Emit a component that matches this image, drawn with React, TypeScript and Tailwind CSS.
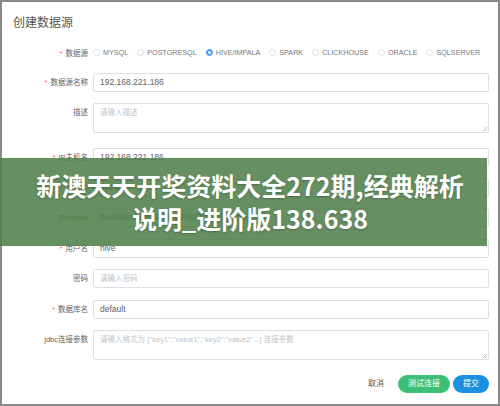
import React from 'react';

const FONT = '"Liberation Sans", "Noto Sans CJK SC", sans-serif';

const dbTypes = ['MYSQL', 'POSTGRESQL', 'HIVE/IMPALA', 'SPARK', 'CLICKHOUSE', 'ORACLE', 'SQLSERVER'];

const Label: React.FC<{ text: string; required?: boolean; top?: boolean }> = ({ text, required, top }) => (
  <div className={`w-[91px] shrink-0 flex justify-end pr-[5px] text-[7.5px] text-[#606266] leading-[19px] ${top ? 'self-start' : 'items-center'}`}>
    {required && <span className="text-[#f56c6c] mr-[3px]">*</span>}
    <span>{text}</span>
  </div>
);

const Input: React.FC<{ value?: string; placeholder?: string }> = ({ value, placeholder }) => (
  <div className="flex-1 h-[19px] border border-[#dcdfe6] rounded-[2px] px-[6px] flex items-center text-[8.5px]">
    {value ? <span className="text-[#606266]">{value}</span> : <span className="text-[#c0c4cc] text-[7.5px]">{placeholder}</span>}
  </div>
);

const Textarea: React.FC<{ placeholder: string }> = ({ placeholder }) => (
  <div className="relative flex-1 h-[30px] border border-[#dcdfe6] rounded-[2px] px-[6px] pt-[4px] text-[7.5px] text-[#c0c4cc] leading-[10px]">
    {placeholder}
    <svg className="absolute right-[1px] bottom-[1px]" width="5" height="5" viewBox="0 0 5 5">
      <path d="M5 1L1 5M5 3L3 5" stroke="#999" strokeWidth="0.6" />
    </svg>
  </div>
);

const Row: React.FC<{ children: React.ReactNode; className?: string }> = ({ children, className = '' }) => (
  <div className={`flex ${className}`}>{children}</div>
);

export default function App() {
  return (
    <div className="relative w-[500px] h-[406px] bg-white overflow-hidden" style={{ fontFamily: FONT }}>
      <div className="w-full h-full border-2 border-[#8a8a8a] pr-[9px]">
        <div className="pl-[11px] pt-[12px] text-[12px] leading-[18px] text-[#555]">创建数据源</div>

        {/* data source type */}
        <Row className="mt-[14px] h-[14px] items-center">
          <Label text="数据源" required />
          <div className="flex items-center gap-[9px] text-[7.2px] text-[#777]">
            {dbTypes.map(t => (
              <div key={t} className="flex items-center gap-[3px]">
                {t === 'HIVE/IMPALA' ? (
                  <span className="w-[7px] h-[7px] rounded-full border border-[#409eff] bg-[#409eff] flex items-center justify-center">
                    <span className="w-[3px] h-[3px] rounded-full bg-white" />
                  </span>
                ) : (
                  <span className="w-[7px] h-[7px] rounded-full border border-[#dcdfe6]" />
                )}
                <span>{t}</span>
              </div>
            ))}
          </div>
        </Row>

        <Row className="mt-[13px]">
          <Label text="数据源名称" required />
          <Input value="192.168.221.186" />
        </Row>
        <Row className="mt-[11px]">
          <Label text="描述" top />
          <Textarea placeholder="请输入描述" />
        </Row>
        <Row className="mt-[15px]">
          <Label text="IP主机名" required />
          <Input value="192.168.221.186" />
        </Row>
        <Row className="mt-[11px]">
          <Label text="端口" required />
          <Input value="10000" />
        </Row>
        <Row className="mt-[11px]">
          <Label text="Principal" required />
          <Input value="hive/admin@HADOOP.MODULE.COM" />
        </Row>
        <Row className="mt-[12px]">
          <Label text="用户名" required />
          <Input value="hive" />
        </Row>
        <Row className="mt-[11px]">
          <Label text="密码" />
          <Input placeholder="请输入密码" />
        </Row>
        <Row className="mt-[12px]">
          <Label text="数据库名" required />
          <Input value="default" />
        </Row>
        <Row className="mt-[11px]">
          <Label text="jdbc连接参数" top />
          <Textarea placeholder={'请输入格式为 {"key1":"value1","key2":"value2"...} 连接参数'} />
        </Row>

        <div className="mt-[15px] flex justify-end items-center gap-[3px] text-[8px]">
          <span className="text-[#555] mr-[11px]">取消</span>
          <span className="w-[52px] h-[18px] rounded-full bg-[#3cbf74] text-white flex items-center justify-center">测试连接</span>
          <span className="w-[36px] h-[18px] rounded-full bg-[#1b8fe0] text-white flex items-center justify-center">提交</span>
        </div>
      </div>

      {/* promo overlay */}
      <div className="absolute left-0 right-0 top-[158px] h-[88px] flex items-center justify-center">
        <div className="absolute left-0 top-0 w-[487px] h-full bg-[#4f7f4a]/[0.87]" />
        <div
          className="relative text-center text-white font-bold text-[25px] leading-[33px] [text-shadow:0_1px_2px_rgba(0,0,0,0.25)]"
          style={{ fontFamily: '"Noto Sans CJK SC", "Noto Sans", sans-serif' }}
        >
          新澳天天开奖资料大全272期,经典解析
          <br />
          说明_进阶版138.638
        </div>
      </div>
    </div>
  );
}
